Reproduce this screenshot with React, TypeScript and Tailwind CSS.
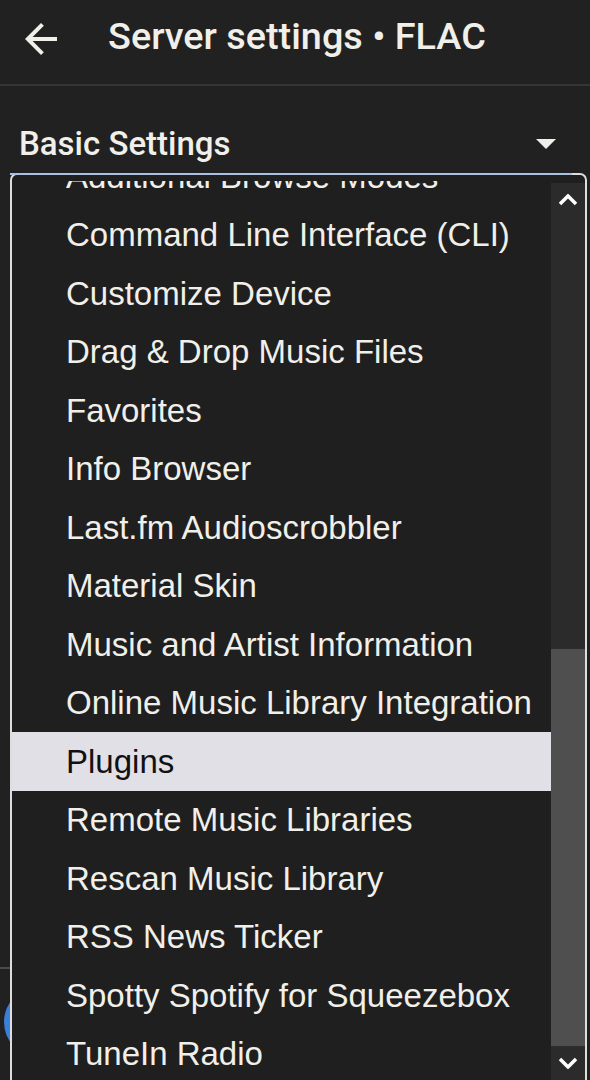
const items = [
    "Additional Browse Modes",
    "Command Line Interface (CLI)",
    "Customize Device",
    "Drag & Drop Music Files",
    "Favorites",
    "Info Browser",
    "Last.fm Audioscrobbler",
    "Material Skin",
    "Music and Artist Information",
    "Online Music Library Integration",
    "Plugins",
    "Remote Music Libraries",
    "Rescan Music Library",
    "RSS News Ticker",
    "Spotty Spotify for Squeezebox",
    "TuneIn Radio",
];

function Chevron({ up }: { up?: boolean }) {
    return (
        <svg width="18" height="12" viewBox="0 0 18 12" className={up ? "" : "rotate-180"}>
            <path d="M1 10 L9 2 L17 10" fill="none" stroke="#fff" strokeWidth="3.5" />
        </svg>
    );
}

export default function App() {
    return (
        <div className="relative w-[590px] h-[1080px] overflow-hidden bg-[#212121] text-[#f1efea]">
            <header className="h-[86px] flex items-center border-b-2 border-[#353535]">
                <svg width="48" height="48" viewBox="0 0 24 24" className="ml-[17px] mt-[-6px]">
                    <path d="M20 11H7.83l5.59-5.59L12 4l-8 8 8 8 1.41-1.41L7.83 13H20v-2z" fill="#f1efea" />
                </svg>
                <h1 className="ml-[43px] mt-[-12px] text-[37.8px] font-medium font-['Roboto',sans-serif]">
                    Server settings • FLAC
                </h1>
            </header>

            <div className="px-[19px] pt-[41px] flex items-center justify-between font-['Roboto',sans-serif]">
                <span className="text-[33px] font-medium leading-[34px]">Basic Settings</span>
                <svg width="20" height="10" viewBox="0 0 20 10" className="mr-[15px]">
                    <path d="M0 0 L20 0 L10 10 z" fill="#f1efea" />
                </svg>
            </div>

            {/* FAB peeking out behind the popup */}
            <div className="absolute left-[4px] top-[987px] w-[70px] h-[70px] rounded-full bg-[#3b80d8]" />
            <div className="absolute left-0 top-[967px] w-[10px] h-[2px] bg-[#4a4a4a]" />

            <div className="absolute left-[10px] top-[173px] w-[577px] h-[920px] border-2 border-[#dedede] rounded-[7px] bg-[#1f1f1f] flex overflow-hidden">
                <div className="flex-1 overflow-hidden mt-[6px]">
                    <ul className="mt-[-34px] font-['Liberation_Sans',Arial,sans-serif] text-[33px]">
                        {items.map((it) => (
                            <li
                                key={it}
                                className={
                                    "h-[58.5px] flex items-center pl-[54px] whitespace-nowrap " +
                                    (it === "Plugins" ? "bg-[#e1e0e6] text-[#111]" : "")
                                }
                            >
                                {it}
                            </li>
                        ))}
                    </ul>
                </div>
                <div className="w-[34px] mt-[8px] flex flex-col bg-[#2b2b2b]">
                    <div className="h-[34px] flex items-center justify-center">
                        <Chevron up />
                    </div>
                    <div className="h-[432px]" />
                    <div className="h-[397px] bg-[#4f4f4f]" />
                    <div className="h-[34px] flex items-center justify-center">
                        <Chevron />
                    </div>
                </div>
            </div>
            <div className="absolute left-[10px] top-[173px] w-[562px] h-[2px] bg-[#a9bfe4]" />
        </div>
    );
}
